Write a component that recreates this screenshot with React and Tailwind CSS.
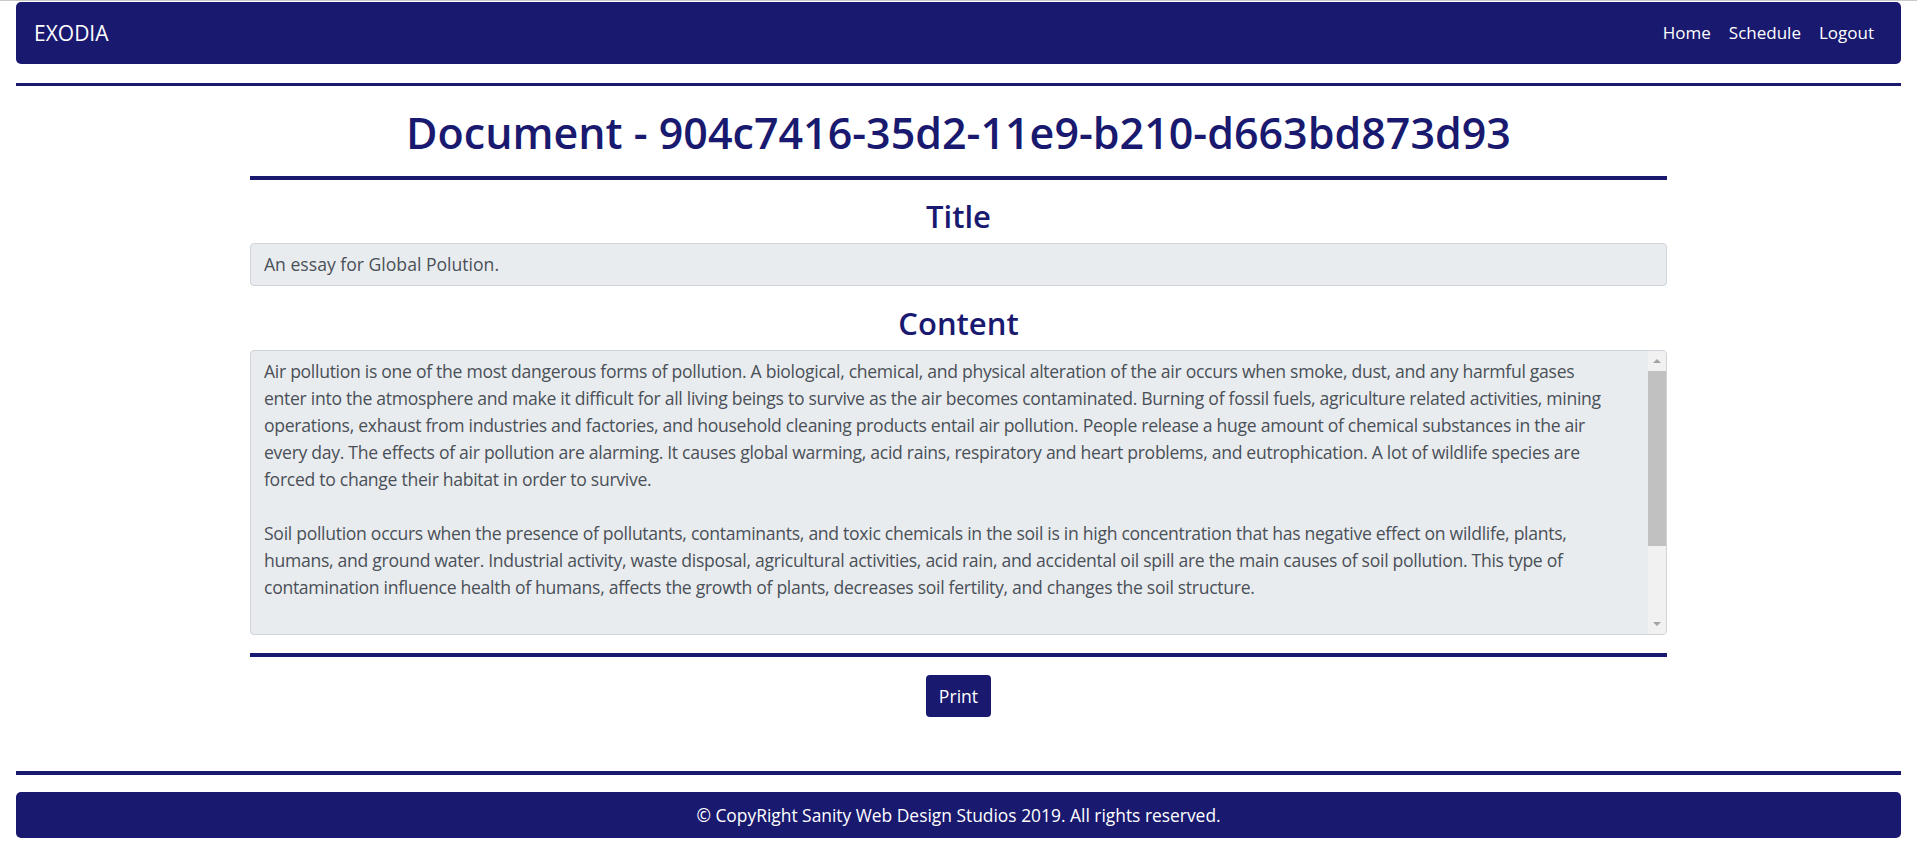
import React from 'react';

const essay = [
  'Air pollution is one of the most dangerous forms of pollution. A biological, chemical, and physical alteration of the air occurs when smoke, dust, and any harmful gases',
  'enter into the atmosphere and make it difficult for all living beings to survive as the air becomes contaminated. Burning of fossil fuels, agriculture related activities, mining',
  'operations, exhaust from industries and factories, and household cleaning products entail air pollution. People release a huge amount of chemical substances in the air',
  'every day. The effects of air pollution are alarming. It causes global warming, acid rains, respiratory and heart problems, and eutrophication. A lot of wildlife species are',
  'forced to change their habitat in order to survive.',
  '',
  'Soil pollution occurs when the presence of pollutants, contaminants, and toxic chemicals in the soil is in high concentration that has negative effect on wildlife, plants,',
  'humans, and ground water. Industrial activity, waste disposal, agricultural activities, acid rain, and accidental oil spill are the main causes of soil pollution. This type of',
  'contamination influence health of humans, affects the growth of plants, decreases soil fertility, and changes the soil structure.',
  '',
  'Water pollution is able to lead our world on a path of destruction. Water is one of the greatest natural resources of the whole humanity. Nothing will be able to live',
  'without water. However, we do not appreciate this fact. People pollute water through sewage, industrial waste, oil spills, pesticides and fertilizers from agricultural',
  'run-off, and plastic that is dumped into rivers, lakes and oceans. Polluted water causes diseases such as cholera and typhoid, kills marine life, and destroys the',
  'balance of aquatic ecosystems.',
].join('\n');

function Arrow({ down }) {
  return (
    <svg width="8" height="4" viewBox="0 0 8 4">
      <polygon points={down ? '0,0 8,0 4,4' : '0,4 8,4 4,0'} fill="#a3a3a3" />
    </svg>
  );
}

export default function App() {
  return (
    <div className="min-h-screen bg-white border-t border-[#c9c9c9] pt-px font-['Open_Sans','Noto_Sans',sans-serif]">
      {/* navbar */}
      <nav className="mx-[16px] h-[62px] rounded-[5px] bg-[#191970] flex items-center justify-between pl-[18px] pr-[27px]">
        <a className="text-white text-[21px] leading-none">EXODIA</a>
        <div className="flex items-center text-white text-[17px]">
          <a className="px-[9px]">Home</a>
          <a className="px-[9px]">Schedule</a>
          <a className="pl-[9px]">Logout</a>
        </div>
      </nav>
      <div className="mx-[16px] mt-[19px] h-[3px] bg-[#191970]" />

      <main className="w-[1417px] mx-auto">
        <h1 className="mt-[21px] text-center text-[43px] leading-[1.2] font-semibold text-[#191970]">
          Document - 904c7416-35d2-11e9-b210-d663bd873d93
        </h1>
        <div className="mt-[17px] h-[4px] bg-[#191970]" />

        <h2 className="mt-[18px] text-center text-[31px] leading-[1.2] font-semibold text-[#191970]">Title</h2>
        <input
          readOnly
          value="An essay for Global Polution."
          className="mt-[8px] block w-full h-[43px] px-[13px] rounded-[4px] border border-[#ced4da] bg-[#e9ecef] text-[#495057] text-[17.6px] outline-none"
        />

        <h2 className="mt-[19px] text-center text-[31px] leading-[1.2] font-semibold text-[#191970]">Content</h2>
        <div className="mt-[8px] h-[285px] flex rounded-[4px] border border-[#ced4da] bg-[#e9ecef] overflow-hidden">
          <textarea
            readOnly
            value={essay}
            className="flex-1 h-full px-[13px] py-[7px] bg-transparent text-[#495057] text-[17.6px] leading-[27px] tracking-[-0.3px] whitespace-pre outline-none resize-none overflow-hidden"
          />
          {/* scrollbar */}
          <div className="w-[18px] flex flex-col bg-[#f1f1f1]">
            <div className="h-[20px] flex items-center justify-center">
              <Arrow />
            </div>
            <div className="h-[175px] bg-[#c1c1c1]" />
            <div className="flex-1" />
            <div className="h-[20px] flex items-center justify-center">
              <Arrow down />
            </div>
          </div>
        </div>
        <div className="mt-[18px] h-[4px] bg-[#191970]" />

        <div className="mt-[18px] flex justify-center">
          <button className="h-[42px] px-[13px] rounded-[4px] bg-[#191970] text-white text-[17.6px]">Print</button>
        </div>
      </main>

      <div className="mx-[16px] mt-[54px] h-[4px] bg-[#191970]" />
      <footer className="mx-[16px] mt-[17px] h-[46px] rounded-[5px] bg-[#191970] flex items-center justify-center text-white text-[17.4px]">
        © CopyRight Sanity Web Design Studios 2019. All rights reserved.
      </footer>
    </div>
  );
}
